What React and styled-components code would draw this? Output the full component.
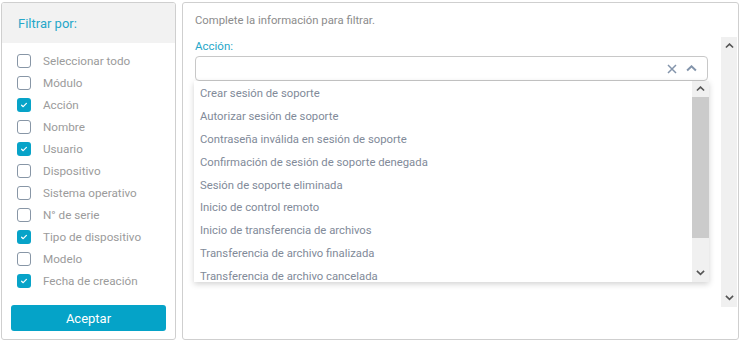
import styled, { createGlobalStyle } from "styled-components";

const GlobalStyle = createGlobalStyle`
    html, body {
        margin: 0;
        padding: 0;
        background: #ffffff;
        font-family: Roboto, "Liberation Sans", sans-serif;
    }
`;

const Page = styled.div`
    display: flex;
    gap: 6px;
    padding: 2px 3px 3px 1px;
    height: 343px;
    box-sizing: border-box;
`;

const FilterPanel = styled.aside`
    width: 175px;
    flex-shrink: 0;
    border: 1px solid #cfcfcf;
    border-radius: 3px;
    display: flex;
    flex-direction: column;
    box-sizing: border-box;
    overflow: hidden;
`;

const PanelHeader = styled.div`
    height: 40px;
    background: #f2f2f2;
    display: flex;
    align-items: center;
    padding-left: 16px;
    font-size: 13px;
    color: #26a7c9;
`;

const OptionList = styled.ul`
    list-style: none;
    margin: 0;
    padding: 7px 0 0 15px;
    display: flex;
    flex-direction: column;
`;

const Option = styled.li`
    height: 22px;
    display: flex;
    align-items: center;
    gap: 12px;
    font-size: 11.7px;
    color: #9b9b9b;
`;

const Box = styled.span`
    width: 14px;
    height: 14px;
    box-sizing: border-box;
    border-radius: 3px;
    border: ${({ $checked }) => ($checked ? "none" : "1.3px solid #8896a6")};
    background: ${({ $checked }) => ($checked ? "#07a3c8" : "#fff")};
    display: flex;
    align-items: center;
    justify-content: center;
`;

const AcceptButton = styled.button`
    margin: auto 9px 8px 9px;
    height: 26px;
    border: none;
    border-radius: 3px;
    background: #05a3c8;
    color: #fff;
    font-family: inherit;
    font-size: 13px;
`;

const FormPanel = styled.section`
    flex: 1;
    border: 1px solid #cfcfcf;
    border-radius: 3px;
    padding: 11px 0 0 12px;
    box-sizing: border-box;
`;

const Hint = styled.div`
    font-size: 11.3px;
    color: #8c8c8c;
    height: 23px;
`;

const ScrollArea = styled.div`
    display: flex;
    height: 270px;
`;

const Form = styled.div`
    flex: 1;
    padding-right: 13px;
`;

const Label = styled.div`
    font-size: 11.5px;
    color: #26a7c9;
    height: 20px;
    display: flex;
    align-items: center;
    margin-top: -1px;
`;

const SelectWrap = styled.div`
    position: relative;
`;

const SelectBox = styled.div`
    height: 25px;
    border: 1px solid #c8c8c8;
    border-radius: 4px;
    box-sizing: border-box;
    display: flex;
    align-items: center;
    justify-content: flex-end;
    gap: 9px;
    padding-right: 10px;
`;

const Menu = styled.div`
    position: absolute;
    top: 25px;
    left: -1px;
    right: -1px;
    height: 201px;
    background: #fff;
    box-shadow: 0 2px 6px rgba(0, 0, 0, 0.18);
    display: flex;
    z-index: 5;
`;

const MenuItems = styled.ul`
    flex: 1;
    list-style: none;
    margin: 0;
    padding: 1px 0 0 6px;
    overflow: hidden;
`;

const MenuItem = styled.li`
    height: 22.9px;
    display: flex;
    align-items: center;
    font-size: 11.3px;
    color: #818a99;
    white-space: nowrap;
`;

const Scrollbar = styled.div`
    width: ${({ $w }) => $w}px;
    background: #f0f0f0;
    display: flex;
    flex-direction: column;
    align-items: center;
    flex-shrink: 0;
    margin-right: ${({ $mr }) => $mr || 0}px;
`;

const Arrow = styled.div`
    height: ${({ $h }) => $h}px;
    display: flex;
    align-items: center;
    justify-content: center;
    flex-shrink: 0;
`;

const Track = styled.div`
    flex: 1;
    width: 100%;
    display: flex;
    flex-direction: column;
`;

const Thumb = styled.div`
    width: 100%;
    height: ${({ $h }) => $h}px;
    background: #cbcbcb;
`;

const Check = () => (
    <svg width="8" height="8" viewBox="0 0 8 8">
        <path d="M1.6 4.2 L3.2 5.7 L6.4 2.4" fill="none" stroke="#fff" strokeWidth="1.2" strokeLinecap="round" strokeLinejoin="round" />
    </svg>
);

const Caret = ({ up, color = "#555", w = 9 }) => (
    <svg width={w} height={w * 0.6} viewBox="0 0 10 6">
        <path d={up ? "M1 5 L5 1.2 L9 5" : "M1 1 L5 4.8 L9 1"} fill="none" stroke={color} strokeWidth="1.8" />
    </svg>
);

const ClearIcon = () => (
    <svg width="10" height="10" viewBox="0 0 10 10">
        <path d="M1 1 L9 9 M9 1 L1 9" stroke="#8394ab" strokeWidth="1.5" />
    </svg>
);

const fields = [
    ["Seleccionar todo", false],
    ["Módulo", false],
    ["Acción", true],
    ["Nombre", false],
    ["Usuario", true],
    ["Dispositivo", false],
    ["Sistema operativo", false],
    ["N° de serie", false],
    ["Tipo de dispositivo", true],
    ["Modelo", false],
    ["Fecha de creación", true],
];

const actions = [
    "Crear sesión de soporte",
    "Autorizar sesión de soporte",
    "Contraseña inválida en sesión de soporte",
    "Confirmación de sesión de soporte denegada",
    "Sesión de soporte eliminada",
    "Inicio de control remoto",
    "Inicio de transferencia de archivos",
    "Transferencia de archivo finalizada",
    "Transferencia de archivo cancelada",
];

export default function App() {
    return (
        <>
            <GlobalStyle />
            <Page>
                <FilterPanel>
                    <PanelHeader>Filtrar por:</PanelHeader>
                    <OptionList>
                        {fields.map(([label, checked]) => (
                            <Option key={label}>
                                <Box $checked={checked}>{checked && <Check />}</Box>
                                {label}
                            </Option>
                        ))}
                    </OptionList>
                    <AcceptButton>Aceptar</AcceptButton>
                </FilterPanel>
                <FormPanel>
                    <Hint>Complete la información para filtrar.</Hint>
                    <ScrollArea>
                        <Form>
                            <Label>Acción:</Label>
                            <SelectWrap>
                                <SelectBox>
                                    <ClearIcon />
                                    <Caret up color="#8394ab" w={11} />
                                </SelectBox>
                                <Menu>
                                    <MenuItems>
                                        {actions.map((a) => (
                                            <MenuItem key={a}>{a}</MenuItem>
                                        ))}
                                    </MenuItems>
                                    <Scrollbar $w={17}>
                                        <Arrow $h={16}><Caret up /></Arrow>
                                        <Track>
                                            <Thumb $h={141} />
                                        </Track>
                                        <Arrow $h={18}><Caret /></Arrow>
                                    </Scrollbar>
                                </Menu>
                            </SelectWrap>
                        </Form>
                        <Scrollbar $w={16} $mr={1}>
                            <Arrow $h={18}><Caret up /></Arrow>
                            <Track />
                            <Arrow $h={18}><Caret /></Arrow>
                        </Scrollbar>
                    </ScrollArea>
                </FormPanel>
            </Page>
        </>
    );
}
